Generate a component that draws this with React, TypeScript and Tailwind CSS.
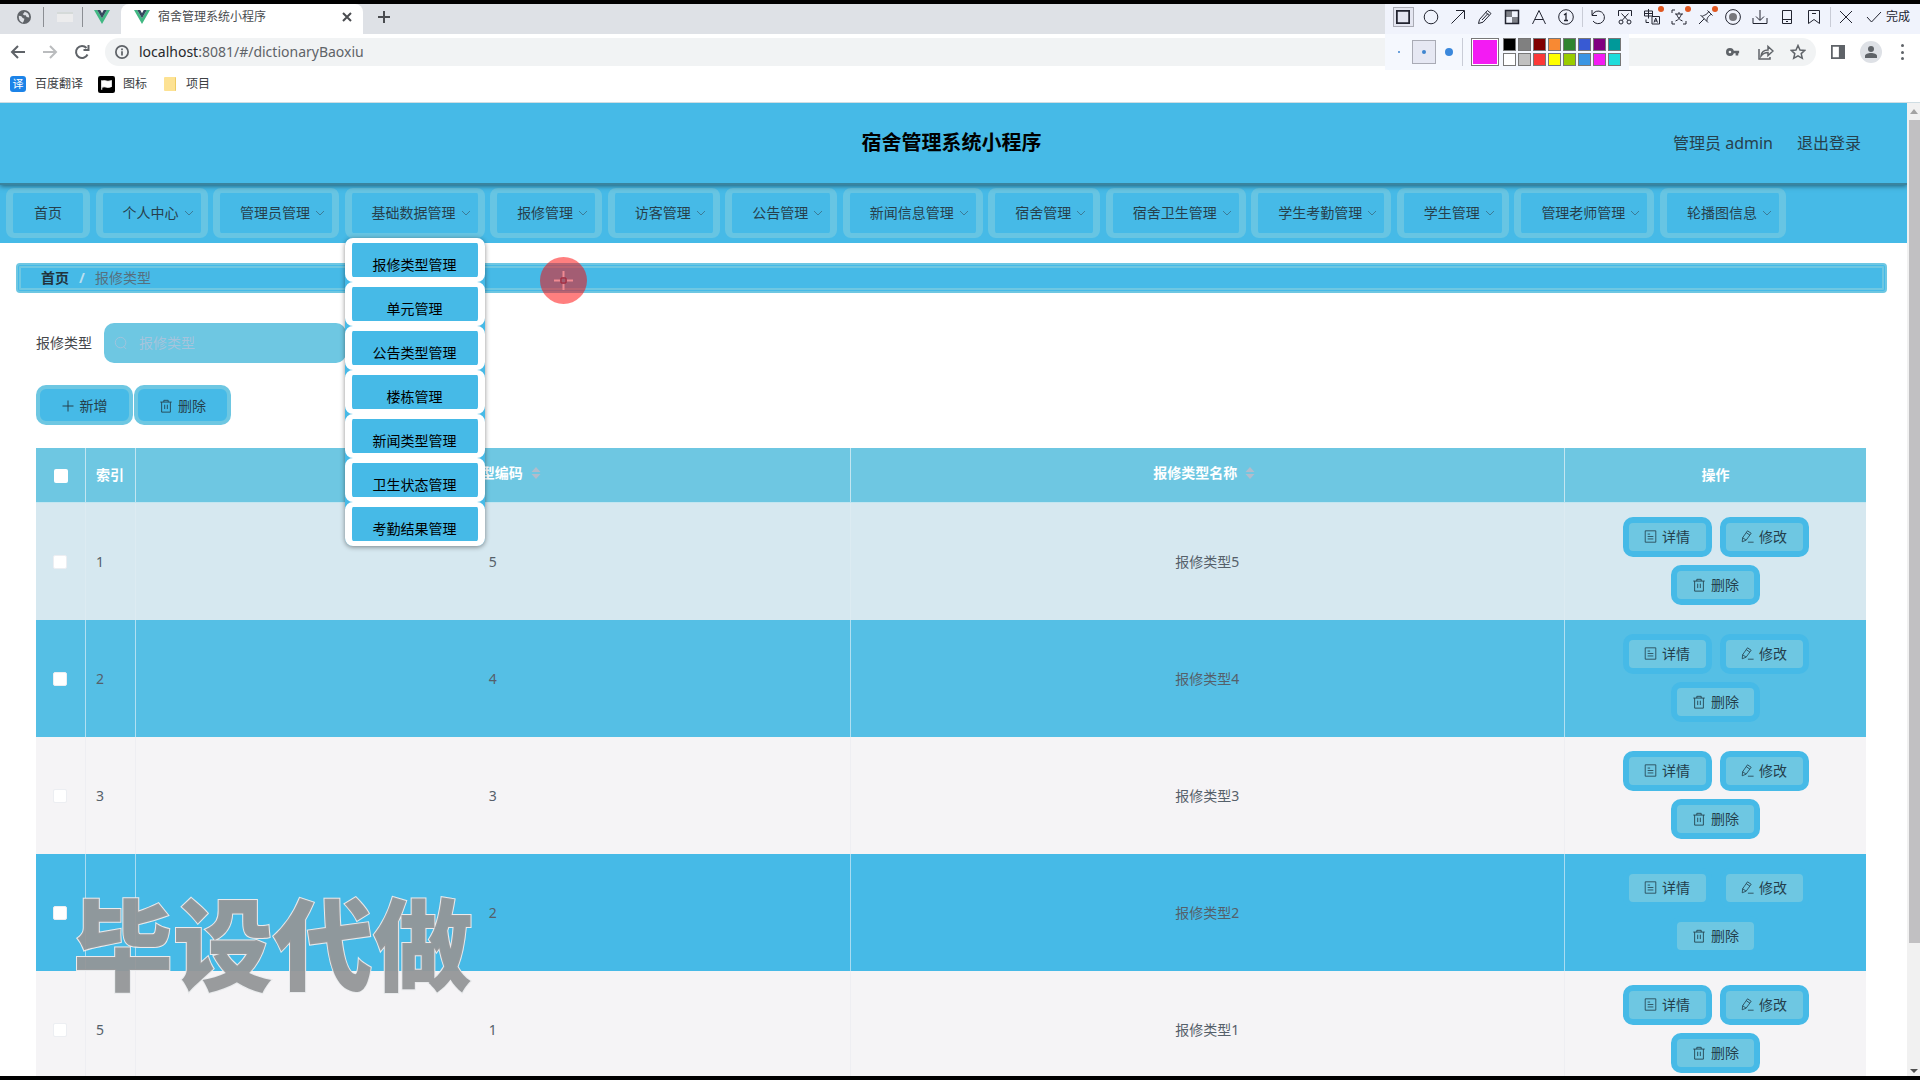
import type { ReactNode } from "react";

const navItems = [
  "个人中心",
  "管理员管理",
  "基础数据管理",
  "报修管理",
  "访客管理",
  "公告管理",
  "新闻信息管理",
  "宿舍管理",
  "宿舍卫生管理",
  "学生考勤管理",
  "学生管理",
  "管理老师管理",
  "轮播图信息",
];

const subMenu = [
  "报修类型管理",
  "单元管理",
  "公告类型管理",
  "楼栋管理",
  "新闻类型管理",
  "卫生状态管理",
  "考勤结果管理",
];

const rows = [
  { index: "1", code: 5, name: "报修类型5", bg: "bg-[#d6e8f0]", line: "border-[#dcebf2]" },
  { index: "2", code: 4, name: "报修类型4", bg: "bg-[#55bfe5]", line: "border-[#b0e0f2]" },
  { index: "3", code: 3, name: "报修类型3", bg: "bg-[#f5f4f6]", line: "border-[#eeeef2]" },
  { index: "", code: 2, name: "报修类型2", bg: "bg-[#46bae7]", line: "border-[#a8dcf2]" },
  { index: "5", code: 1, name: "报修类型1", bg: "bg-[#f5f4f6]", line: "border-[#eeeef2]" },
];

const swatches = [
  "bg-black",
  "bg-[#808080]",
  "bg-[#800000]",
  "bg-[#f88933]",
  "bg-[#308430]",
  "bg-[#385ad3]",
  "bg-[#800080]",
  "bg-[#009999]",
  "bg-white",
  "bg-[#c0c0c0]",
  "bg-[#fb3838]",
  "bg-[#ffff00]",
  "bg-[#99cc00]",
  "bg-[#3894e4]",
  "bg-[#f31bf3]",
  "bg-[#1edcdc]",
];

function Icon({ children, className = "size-4", box = 16, width = 1 }: { children: ReactNode; className?: string; box?: number; width?: number }) {
  return (
    <svg
      viewBox={`0 0 ${box} ${box}`}
      className={`shrink-0 ${className}`}
      fill="none"
      stroke="currentColor"
      strokeWidth={width}
      aria-hidden="true"
    >
      {children}
    </svg>
  );
}

function VueLogo() {
  return (
    <svg viewBox="0 0 16 14" className="h-[14px] w-4 shrink-0" aria-hidden="true">
      <path d="M0 0h3.2L8 8.3 12.8 0H16L8 14z" fill="#41b883" />
      <path d="M3.2 0h3L8 3.2 9.8 0h3L8 8.3z" fill="#35495e" />
    </svg>
  );
}

const TrashIcon = () => (
  <Icon className="size-[14px]">
    <path d="M1.5 3.5h13M5.5 3.5v-2h5v2M3 3.5v11.500h10V3.500M6.500 6.500v5M9.500 6.500v5" />
  </Icon>
);

const DocIcon = () => (
  <Icon className="size-[13px]">
    <path d="M1.500 1h13v14h-13zM4.500 5h3M4.500 8h7M4.500 11h7" />
  </Icon>
);

const EditIcon = () => (
  <Icon className="size-[13px]">
    <path d="M1.500 14.500l.5-5L8 1l4.500 3-6.200 8.500-4.800 2zM6.500 3.300L11 6.400M2 9.500l4.300 3M8.500 15H15.500" />
  </Icon>
);

const shotTools: { label: string; dot?: boolean; art: ReactNode }[] = [
  { label: "椭圆", art: <circle cx="8" cy="8" r="6.8" /> },
  { label: "箭头", art: <path d="M1.5 14.5L14 2M6 1.5h8.5V10" /> },
  { label: "画笔", art: <path d="M1.500 14.500l1-4 8-9 3.500 3L6 13.200l-4.500 1.300zM8.800 3.400l3.400 3M5 11l6-6.500" /> },
  {
    label: "马赛克",
    art: (
      <>
        <path d="M2 2h6v6H2zM8 8h6v6H8z" fill="#7e8087" stroke="none" />
        <path d="M1.500 1.500h13v13h-13z" strokeWidth="1.500" />
      </>
    ),
  },
  { label: "文字", art: <path d="M1.500 15L8 1.500 14.500 15M4 10.500h8" /> },
  {
    label: "序号",
    art: (
      <>
        <circle cx="8" cy="8" r="7.300" />
        <path d="M6 6l2-1.500v7M6 11.500h4" strokeWidth="1.300" />
      </>
    ),
  },
];

const shotActions: { label: string; dot?: boolean; art: ReactNode }[] = [
  { label: "撤销", art: <path d="M2 1v5.500h5M2.300 6A6.300 6.300 0 1 1 3 12" /> },
  {
    label: "截长图",
    art: (
      <>
        <path d="M1.500 7V1.500h13V7M4.500 4.500l6.500 7M11.500 4.500l-6.500 7" />
        <circle cx="4" cy="13" r="2" />
        <circle cx="12" cy="13" r="2" />
      </>
    ),
  },
  {
    label: "翻译",
    dot: true,
    art: <path d="M.5 2h8v5h-8zM4.500 0v9.500M.5 4.500h8M8 7.500h7.500v7.500H8zM10 13.500l1.700-4.500 1.800 4.500M10.500 12h2.500M2 10.500v3h3" />,
  },
  {
    label: "文字识别",
    dot: true,
    art: <path d="M1 4V1h3M1 12v3h3M15 12v3h-3M4 5h8M8 3v2M5.500 5c1 3 3 6 6 7M10.500 5c-1 3-3 6-6 7" />,
  },
  { label: "钉住", dot: true, art: <path d="M1 15l5.200-5.200M2.500 6l7.500 7.500M4 7.500C6 6 8 6.500 11 2.500M8.800 12c.5-2-.2-3.500 4-6.500M9.500 1.500l5 5" /> },
  {
    label: "录制",
    art: (
      <>
        <circle cx="8" cy="8" r="7.400" />
        <circle cx="8" cy="8" r="4" fill="#77777c" stroke="none" />
      </>
    ),
  },
  { label: "保存", art: <path d="M8 1v10M4 7.500l4 4 4-4M1 9v5.500h14V9" /> },
  { label: "发送到手机", art: <path d="M3.500 1.500h9v13h-9zM3.500 10.500h9M7 12.500h2" /> },
  { label: "收藏", art: <path d="M2.500 1.500h11v13L8 10.500l-5.500 4zM6 4.500h4" /> },
];

function ToolButton({ label, dot, art }: { label: string; dot?: boolean; art: ReactNode }) {
  return (
    <button aria-label={label} className="relative flex w-[27px] justify-center">
      <Icon>{art}</Icon>
      {dot && <span className="absolute -top-[3px] right-[2px] size-[6px] rounded-full bg-[#e0561f]" />}
    </button>
  );
}

function CaptureToolbar() {
  return (
    <>
      <div className="absolute top-0 right-0 flex h-[30px] items-center bg-[#f0f3fc] pr-[10px] pb-1 pl-1 text-[#222430]">
        <button aria-label="矩形" className="mx-1 flex h-5 w-[21px] items-center justify-center border border-[#a9abb5] bg-[#e4e6f1]">
          <Icon className="size-[14px]" width={2}>
            <path d="M1 1h14v14H1z" />
          </Icon>
        </button>
        {shotTools.map((t) => (
          <ToolButton key={t.label} {...t} />
        ))}
        <span className="mx-[2px] h-5 w-px bg-[#c9ccd6]" />
        {shotActions.map((t) => (
          <ToolButton key={t.label} {...t} />
        ))}
        <span className="mx-[2px] h-5 w-px bg-[#c9ccd6]" />
        <ToolButton label="关闭" art={<path d="M2 2l12 12M14 2L2 14" />} />
        <button className="flex items-center gap-1 pl-[6px] text-[12px]">
          <Icon>
            <path d="M1 8l4.5 5L15 3" />
          </Icon>
          完成
        </button>
      </div>
      <div className="absolute top-[30px] right-[291px] flex h-9 items-center bg-[#f5f8fe] pr-2 pl-2">
        <span className="mr-3 ml-[5px] size-[2px] rounded-full bg-[#3f86d0]" />
        <button aria-label="中" className="flex size-6 items-center justify-center border border-[#a9abb5] bg-[#e6e8f3]">
          <span className="size-1 rounded-full bg-[#3f86d0]" />
        </button>
        <span className="mx-[9px] size-2 rounded-full bg-[#3b88dc]" />
        <span className="mr-2 h-7 w-px bg-[#c9ccd6]" />
        <span className="mr-1 size-7 border border-[#777] bg-[#f31bf3] p-px outline-1 -outline-offset-2 outline-white" />
        <div className="grid grid-cols-8 gap-x-[2px] gap-y-[2px]">
          {swatches.map((c) => (
            <button key={c} aria-label="颜色" className={`size-[13px] border border-[#777] ${c}`} />
          ))}
        </div>
      </div>
    </>
  );
}

function BrowserChrome() {
  return (
    <div className="relative bg-white text-[#4a4c50]">
      <div className="flex h-[30px] bg-[#dee1e6]">
        <div className="flex w-[121px] items-center rounded-br-lg pb-1">
          <span className="flex w-[43px] justify-center pl-1">
            <svg viewBox="0 0 16 16" className="size-[14px]" aria-hidden="true">
              <circle cx="8" cy="8" r="8" fill="#5f6368" />
              <path
                d="M2 6.500l3 .5 1.500 2 2 1-1 3-1 1.500C3.500 13.500 1.800 11 2 6.500zM8.500 2c0 1.500-1 2-2 2.500L8 6h2l1 2 3 .5C14 5 12 2.500 8.500 2z"
                fill="#dee1e6"
              />
            </svg>
          </span>
          <span className="h-5 w-px bg-[#8b8e93]" />
          <span className="flex w-[38px] justify-center pl-1">
            <span className="h-[10px] w-4 border-t-2 border-[#d5dad9] bg-[#ececed]" />
          </span>
          <span className="h-5 w-px bg-[#8b8e93]" />
          <span className="flex w-[38px] justify-center">
            <VueLogo />
          </span>
        </div>
        <div className="flex w-[242px] items-center rounded-t-lg bg-white pr-[10px] pb-1 pl-[13px]">
          <VueLogo />
          <span className="ml-2 flex-1 text-[12px]">宿舍管理系统小程序</span>
          <button aria-label="关闭标签页">
            <Icon className="size-3" box={12} width={2}>
              <path d="M2 2l8 8M10 2l-8 8" />
            </Icon>
          </button>
        </div>
        <button aria-label="新标签页" className="pb-1 pl-[15px]">
          <Icon className="size-3" box={12} width={2}>
            <path d="M6 0v12M0 6h12" />
          </Icon>
        </button>
      </div>

      <div className="flex h-9 items-center pr-3 pl-[10px] text-[#5f6368]">
        <button aria-label="后退" className="mr-4">
          <Icon width={2}>
            <path d="M15 8H2M8 2L2 8l6 6" />
          </Icon>
        </button>
        <button aria-label="前进" className="mr-4 text-[#babcbe]">
          <Icon width={2}>
            <path d="M1 8h13M8 2l6 6-6 6" />
          </Icon>
        </button>
        <button aria-label="重新加载" className="mr-[15px]">
          <Icon width={2}>
            <path d="M13.500 10.500A6 6 0 1 1 12.500 4M14.500 1v5h-5" />
          </Icon>
        </button>
        <div className="flex h-7 flex-1 items-center rounded-full bg-[#f1f3f4] px-[10px]">
          <Icon className="mr-[10px] size-[14px]" width={2}>
            <circle cx="8" cy="8" r="7" />
            <path d="M8 7v5M8 4v2" />
          </Icon>
          <p className="flex-1 text-[14px]">
            <span className="text-[#26282b]">localhost</span>:8081/#/dictionaryBaoxiu
          </p>
          <Icon className="mr-[18px] size-[14px]" width={3}>
            <circle cx="4.500" cy="8" r="3" />
            <path d="M7 8h8M12.500 8v4" />
          </Icon>
          <Icon className="mr-4 size-4" width={1.5}>
            <path d="M1 5v10h11v-2M3 12c.5-4 3-6 7-6V2.500L15 7l-5 4.500V8.500c-3 0-5 1-7 3.500z" />
          </Icon>
          <Icon width={1.5}>
            <path d="M8 1.500l2 4.500 4.800.4-3.600 3.200 1.100 4.700L8 11.800l-4.300 2.500 1.100-4.700L1.200 6.400 6 6z" />
          </Icon>
        </div>
        <Icon className="mx-[15px] size-[14px]" width={2}>
          <path d="M1 1h14v14H1z" />
          <path d="M10 1h5v14h-5z" fill="currentColor" />
        </Icon>
        <span className="mr-[15px] flex size-[22px] items-center justify-center rounded-full bg-[#dee1e6]">
          <svg viewBox="0 0 12 12" className="size-3" fill="#5f6368" aria-hidden="true">
            <circle cx="6" cy="3" r="3" />
            <path d="M0 12v-2c0-2 3-3 6-3s6 1 6 3v2z" />
          </svg>
        </span>
        <button aria-label="菜单" className="flex h-4 flex-col justify-between px-1">
          <i className="size-[3px] rounded-full bg-[#5f6368]" />
          <i className="size-[3px] rounded-full bg-[#5f6368]" />
          <i className="size-[3px] rounded-full bg-[#5f6368]" />
        </button>
      </div>

      <div className="flex h-[33px] items-center border-b border-[#cfdde3] pb-1 pl-[10px] text-[12px] text-[#3c4043]">
        <a href="#" className="mr-[15px] flex items-center">
          <span className="mr-[9px] flex size-4 items-center justify-center rounded-[3px] bg-[#1c83e8] text-[11px] text-white">译</span>
          百度翻译
        </a>
        <a href="#" className="mr-[17px] flex items-center">
          <svg viewBox="0 0 16 16" className="mr-2 size-[17px]" aria-hidden="true">
            <rect width="16" height="16" rx="2" fill="#000" />
            <path d="M3.500 4v9M3.500 5c3-1.500 5 1 9-.5v5.500c-4 1.500-6-1-9 .5z" fill="#fff" stroke="#fff" />
          </svg>
          图标
        </a>
        <a href="#" className="flex items-center">
          <span className="mr-[10px] h-[14px] w-3 rounded-[1px] border-r border-[#eecb62] bg-[#fde293]" />
          项目
        </a>
      </div>
      <CaptureToolbar />
    </div>
  );
}

function MainNav() {
  return (
    <nav className="flex h-[58px] justify-between bg-[#46bae7] pt-[3px] pr-[121px] pl-[6px] text-[14px] text-[#26404c]">
      <a href="#" className="flex h-[50px] items-center rounded-lg border-x-[7px] border-y-[5px] border-[#67c5e3] px-[21px] whitespace-nowrap">
        首页
      </a>
      {navItems.map((item) => (
        <div key={item} className="relative">
          <button className="flex h-[50px] items-center rounded-lg border-x-[7px] border-y-[5px] border-[#67c5e3] pr-[7px] pl-5 whitespace-nowrap">
            {item}
            <Icon className="ml-[5px] size-[10px] text-[#3b7c98]" box={10}>
              <path d="M1 3l4 4 4-4" />
            </Icon>
          </button>
          {item === "基础数据管理" && (
            <ul className="absolute top-[50px] left-0 z-20 w-full rounded-lg bg-[#46bae7] text-center text-black shadow-[0_1px_5px_rgba(0,0,0,0.45)]">
              {subMenu.map((s) => (
                <li key={s}>
                  <a href="#" className="block h-11 rounded-lg border-x-[7px] border-y-[5px] border-white pt-[6px] leading-8 whitespace-nowrap">
                    {s}
                  </a>
                </li>
              ))}
            </ul>
          )}
        </div>
      ))}
    </nav>
  );
}

function Sorter() {
  return (
    <svg viewBox="0 0 10 14" className="ml-2 h-[14px] w-[10px]" fill="#b2bccb" aria-hidden="true">
      <path d="M5 1l4.500 5h-9zM5 13l4.500-5h-9z" />
    </svg>
  );
}

function ActionButton({ icon, children }: { icon: ReactNode; children: ReactNode }) {
  return (
    <button className="flex h-10 w-[89px] items-center justify-center gap-[5px] rounded-[10px] border-[6px] border-[#46bae7] bg-[#6ec7e2] text-[14px] text-[#24404c]">
      {icon}
      {children}
    </button>
  );
}

function RepairTable() {
  return (
    <table className="w-full table-fixed border-separate border-spacing-0 text-[14px] text-[#55606a]">
      <colgroup>
        <col className="w-[50px]" />
        <col className="w-[50px]" />
        <col />
        <col />
        <col className="w-[301px]" />
      </colgroup>
      <thead>
        <tr className="h-[55px] bg-[#6ec7e2] text-white">
          <th className="border-r border-b border-[#c3e6f1] pt-[2px]">
            <input type="checkbox" aria-label="全选" className="mx-auto block size-[14px] appearance-none rounded-[2px] bg-white" />
          </th>
          <th className="border-r border-b border-[#c3e6f1] pl-[10px] text-left">索引</th>
          <th className="border-r border-b border-[#c3e6f1] pb-1">
            <span className="flex items-center justify-center pr-[6px]">
              报修类型编码
              <Sorter />
            </span>
          </th>
          <th className="border-r border-b border-[#c3e6f1] pb-1">
            <span className="flex items-center justify-center pr-[6px]">
              报修类型名称
              <Sorter />
            </span>
          </th>
          <th className="border-b border-[#c3e6f1]">操作</th>
        </tr>
      </thead>
      <tbody>
        {rows.map((row) => (
          <tr key={row.code} className={`h-[117px] ${row.bg}`}>
            <td className={`border-r pr-[2px] ${row.line}`}>
              <input
                type="checkbox"
                aria-label={`选择${row.name}`}
                className="mx-auto block size-[14px] appearance-none rounded-[2px] border border-[#eceef2] bg-white"
              />
            </td>
            <td className={`border-r pl-[10px] ${row.line}`}>{row.index}</td>
            <td className={`border-r text-center ${row.line}`}>{row.code}</td>
            <td className={`border-r text-center ${row.line}`}>{row.name}</td>
            <td className="pb-[2px]">
              <div className="mx-auto flex w-[200px] flex-wrap justify-center gap-2">
                <ActionButton icon={<DocIcon />}>详情</ActionButton>
                <ActionButton icon={<EditIcon />}>修改</ActionButton>
                <ActionButton icon={<TrashIcon />}>删除</ActionButton>
              </div>
            </td>
          </tr>
        ))}
      </tbody>
    </table>
  );
}

export default function App() {
  return (
    <div className="flex h-screen flex-col overflow-hidden border-y-4 border-black bg-white font-['Noto_Sans','Noto_Sans_CJK_SC',sans-serif] leading-5">
      <BrowserChrome />
      <div className="relative flex min-h-0 flex-1">
        <div className="min-w-0 flex-1 overflow-hidden">
          <header className="relative z-10 grid h-[82px] grid-cols-3 items-center border-b-2 border-[#39849f] bg-[#46bae7] shadow-[0_1px_5px_rgba(0,0,0,0.5)]">
            <h1 className="col-start-2 pr-1 text-center text-[20px] leading-7 font-bold text-black">宿舍管理系统小程序</h1>
            <div className="flex justify-end gap-6 pr-[46px] text-[16px] text-[#26404c]">
              <span>管理员 admin</span>
              <a href="#">退出登录</a>
            </div>
          </header>
          <div className="relative">
            <MainNav />
          </div>

          <div className="mt-5 mr-5 ml-4 flex h-[30px] items-center rounded border-[5px] border-double border-[#6ec7e2] bg-[#46bae7] pl-5 text-[14px]">
            <a href="#" className="font-bold text-[#22333c]">
              首页
            </a>
            <span className="mx-[9px] w-2 text-center font-bold text-[#b9dff0]">/</span>
            <span className="text-[#56707e]">报修类型</span>
          </div>

          <main className="mt-[30px] mr-[41px] ml-9">
            <div className="flex items-center gap-3 text-[14px]">
              <label htmlFor="type" className="text-[#45474b]">
                报修类型
              </label>
              <div className="flex h-10 w-[242px] items-center rounded-[10px] bg-[#6ec7e2] pl-[10px]">
                <Icon className="mr-[11px] size-[14px] text-[#a5c4dc]">
                  <circle cx="7.500" cy="7.500" r="6" />
                  <path d="M11 12l3 3" />
                </Icon>
                <input id="type" type="text" placeholder="报修类型" className="w-full min-w-0 bg-transparent outline-none placeholder:text-[#a5c4dc]" />
              </div>
            </div>

            <div className="mt-[22px] mb-[23px] flex gap-px text-[14px] text-[#24404c]">
              <button className="flex h-10 w-[97px] items-center justify-center gap-[6px] rounded-[10px] border-4 border-[#6ec7e2] bg-[#46bae7] pt-[2px]">
                <Icon className="size-3" box={12}>
                  <path d="M6 .5v11M.5 6h11" />
                </Icon>
                新增
              </button>
              <button className="flex h-10 w-[97px] items-center justify-center gap-[5px] rounded-[10px] border-4 border-[#6ec7e2] bg-[#46bae7] pt-[2px]">
                <TrashIcon />
                删除
              </button>
            </div>

            <RepairTable />
          </main>
        </div>

        {/* page scrollbar */}
        <div className="flex w-[13px] flex-col items-center bg-[#f1f1f1]">
          <svg viewBox="0 0 8 17" className="h-[17px] w-2" fill="#a3a3a3" aria-hidden="true">
            <path d="M0 11l4-5 4 5z" />
          </svg>
          <div className="w-full flex-1 pl-[2px]">
            <div className="h-[87%] bg-[#c1c0c2]" />
          </div>
          <svg viewBox="0 0 8 10" className="h-[10px] w-2" fill="#505050" aria-hidden="true">
            <path d="M0 3l4 4 4-4z" />
          </svg>
        </div>

        {/* recorder's cursor highlight */}
        <div className="absolute top-[154px] left-[540px] z-30 flex size-[47px] items-center justify-center rounded-full bg-[#ff0000]/50">
          <Icon className="size-[19px] text-[#f08a92]" box={19}>
            <path d="M9.500 0v6M9.500 13v6M0 9.500h6M13 9.500h6" strokeWidth="2" />
            <path d="M7 7h5v5H7z" stroke="#a82234" />
          </Icon>
        </div>

        <p className="absolute bottom-[72px] left-[73px] z-30 text-[100px] leading-[120px] font-black text-[#949698]/95 [-webkit-text-stroke:2px_#e8eaec] [paint-order:stroke]">
          毕设代做
        </p>
      </div>
    </div>
  );
}
